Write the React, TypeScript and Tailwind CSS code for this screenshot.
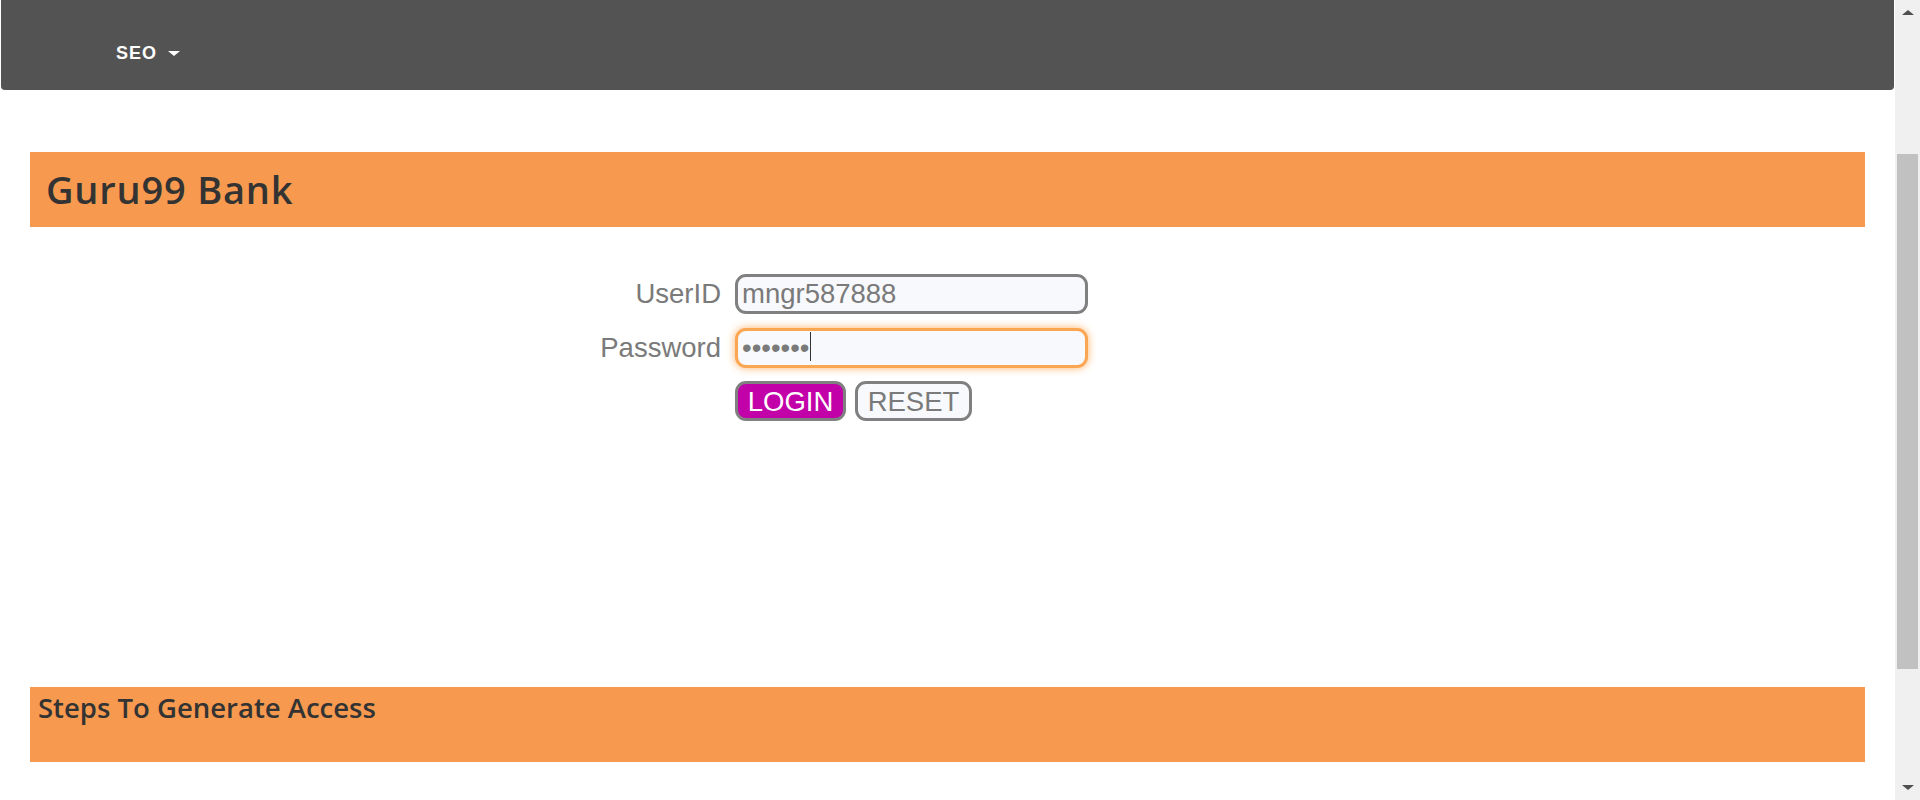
import { FC } from 'react';

const arial = { fontFamily: '"Liberation Sans", Arial, sans-serif' };
const heading = { fontFamily: '"Open Sans", "Noto Sans", sans-serif' };

const Login: FC = () => {
    return (
        <div className="ml-[491px] mt-[47px] grid grid-cols-[200px_auto] gap-x-[14px] gap-y-[13px] items-center text-[27.5px] text-[#7a7a7a]" style={arial}>
            <label className="text-right leading-none">UserID</label>
            <input
                type="text"
                readOnly
                defaultValue="mngr587888"
                className="h-[40px] w-[353px] rounded-[11px] border-[3px] border-[#808080] bg-[#f8f9fc] pl-[4px] text-[#7a7a7a] outline-none"
            />

            <label className="text-right leading-none">Password</label>
            <div className="relative w-[353px]">
                <input
                    type="password"
                    readOnly
                    defaultValue="1234567"
                    className="h-[40px] w-[353px] rounded-[11px] border-[3px] border-[#fba653] bg-[#f8f9fc] pl-[4px] text-[#7a7a7a] outline-none shadow-[0_0_8px_#fbb26a]"
                />
                <span className="absolute left-[75px] top-[5px] h-[29px] w-[1px] bg-[#333]" />
            </div>

            <div />
            <div className="flex gap-[9px]">
                <button type="submit" className="h-[40px] w-[111px] rounded-[11px] border-[3px] border-[#808080] bg-[#c301a9] text-white leading-none">
                    LOGIN
                </button>
                <button type="reset" className="h-[40px] w-[117px] rounded-[11px] border-[3px] border-[#808080] bg-[#f8f9fc] text-[#7a7a7a] leading-none">
                    RESET
                </button>
            </div>
        </div>
    );
};

const App: FC = () => {
    return (
        <div className="flex h-[800px] w-[1920px] overflow-hidden bg-white">
            <div className="flex flex-1 flex-col">
                {/* top nav */}
                <nav className="ml-[1px] h-[90px] w-[1893px] rounded-b-[4px] bg-[#535353] pl-[115px] pt-[43px]">
                    <div className="flex items-center gap-[11px] text-[18px] font-bold leading-[20px] tracking-[1px] text-white" style={arial}>
                        <span>SEO</span>
                        <span className="mt-[1px] h-0 w-0 border-x-[6px] border-t-[5px] border-x-transparent border-t-white" />
                    </div>
                </nav>

                <div className="mt-[62px] px-[30px]">
                    <div className="flex h-[75px] items-center bg-[#f79a4f] pl-[16px]">
                        <h2 className="text-[38px] font-semibold tracking-[0.8px] text-[#333]" style={heading}>
                            Guru99 Bank
                        </h2>
                    </div>

                    <Login />

                    <div className="mt-[266px] h-[75px] bg-[#f79a4f] pl-[8px] pt-[3px]">
                        <h3 className="text-[27.5px] font-semibold leading-[36px] text-[#333]" style={heading}>
                            Steps To Generate Access
                        </h3>
                    </div>
                </div>
            </div>

            {/* scrollbar */}
            <div className="flex w-[25px] flex-col items-center bg-[#f0f0f0]">
                <div className="mt-[10px] h-0 w-0 border-x-[6px] border-b-[5px] border-x-transparent border-b-[#505050]" />
                <div className="mt-[139px] h-[515px] w-[21px] bg-[#c1c1c1]" />
                <div className="mt-auto mb-[10px] h-0 w-0 border-x-[6px] border-t-[5px] border-x-transparent border-t-[#505050]" />
            </div>
        </div>
    );
};

export default App;
